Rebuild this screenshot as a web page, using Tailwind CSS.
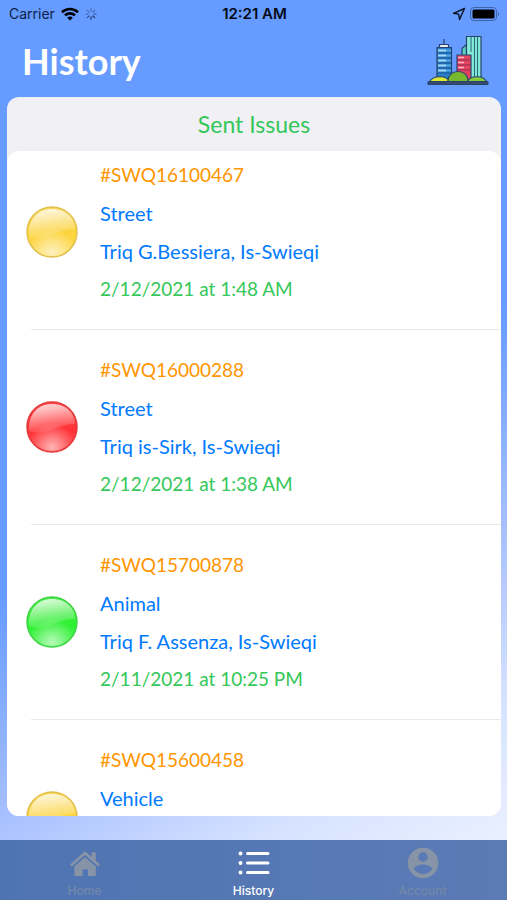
<!DOCTYPE html>
<html lang="en">
<head>
<meta charset="utf-8">
<meta name="viewport" content="width=device-width, initial-scale=1">
<title>History</title>
<script src="https://cdn.jsdelivr.net/npm/@tailwindcss/browser@4"></script>
</head>
<body class="h-screen overflow-hidden flex flex-col bg-[linear-gradient(150deg,#669bff_0%,#669bff_50%,#afc5ff_71%,#d6e2ff_83%,#eaf0ff_95%)] font-['Lato',sans-serif]">
<svg class="absolute size-0" aria-hidden="true">
  <defs>
    <linearGradient id="yBase" x1="0" y1="0" x2="0" y2="1"><stop offset="0" stop-color="#f8d558"/><stop offset=".55" stop-color="#fdd43c"/><stop offset="1" stop-color="#fbdc62"/></linearGradient>
    <linearGradient id="rBase" x1="0" y1="0" x2="0" y2="1"><stop offset="0" stop-color="#ff4a4c"/><stop offset=".55" stop-color="#ff3236"/><stop offset="1" stop-color="#ff4448"/></linearGradient>
    <linearGradient id="gBase" x1="0" y1="0" x2="0" y2="1"><stop offset="0" stop-color="#4cea4c"/><stop offset=".55" stop-color="#2ef032"/><stop offset="1" stop-color="#48f550"/></linearGradient>
    <linearGradient id="shine" x1=".3" y1="0" x2=".55" y2="1"><stop offset="0" stop-color="#fff" stop-opacity=".8"/><stop offset=".6" stop-color="#fff" stop-opacity=".32"/><stop offset="1" stop-color="#fff" stop-opacity=".04"/></linearGradient>
    <radialGradient id="glow" cx=".5" cy=".92" r=".5"><stop offset="0" stop-color="#fff" stop-opacity=".6"/><stop offset="1" stop-color="#fff" stop-opacity="0"/></radialGradient>
    <symbol id="gloss" viewBox="0 0 52 52">
      <path d="M3 30C2 13 12 3 26 3s23 9 23 20c-8 0-14 2-21 5S12 33 3 30z" fill="url(#shine)"/>
      <circle cx="26" cy="26" r="24" fill="url(#glow)"/>
    </symbol>
    <symbol id="ball-yellow" viewBox="0 0 52 52"><circle cx="26" cy="26" r="25" fill="url(#yBase)" stroke="#e2c050" stroke-width="1.5"/><use href="#gloss"/></symbol>
    <symbol id="ball-red" viewBox="0 0 52 52"><circle cx="26" cy="26" r="25" fill="url(#rBase)" stroke="#e23a3c" stroke-width="1.5"/><use href="#gloss"/></symbol>
    <symbol id="ball-green" viewBox="0 0 52 52"><circle cx="26" cy="26" r="25" fill="url(#gBase)" stroke="#40d446" stroke-width="1.5"/><use href="#gloss"/></symbol>
  </defs>
</svg>

<header class="shrink-0">
  <div class="grid grid-cols-3 items-center h-7 pl-[9px] pr-[7px] font-['Inter',sans-serif] text-[#0b1f48]">
    <div class="flex items-center gap-1.5 text-sm">
      <span>Carrier</span>
      <svg class="w-[18px] h-[14px]" viewBox="0 0 18 14" fill="none" stroke="#000" stroke-width="2.6" aria-hidden="true"><path d="M1 5.2a11.5 11.5 0 0 1 16 0M4 8.4a7.2 7.2 0 0 1 10 0"/><path d="M9 13.6 6.2 10.8a4 4 0 0 1 5.6 0z" fill="#000" stroke="none"/></svg>
      <svg class="size-3" viewBox="0 0 12 12" stroke="#1d3260" stroke-width="1.1" stroke-linecap="round" aria-hidden="true"><path d="M6 .8v2.4" opacity=".45"/><path d="m9.7 2.3-1.7 1.7" opacity=".5"/><path d="M11.2 6H8.8" opacity=".65"/><path d="M9.7 9.7 8 8"/><path d="M6 11.2V8.8"/><path d="M2.3 9.7 4 8" opacity=".7"/><path d="M.8 6h2.4" opacity=".5"/><path d="M2.3 2.3 4 4" opacity=".4"/></svg>
    </div>
    <div class="text-center text-[15px] font-semibold text-[#050a18] whitespace-nowrap">12:21 AM</div>
    <div class="flex items-center justify-end gap-1">
      <svg class="size-3.5" viewBox="0 0 14 14" fill="none" stroke="#0b1426" stroke-width="1.4" stroke-linejoin="round" aria-hidden="true"><path d="M12.500 1.500 1.500 6.300l5.200.8.800 5.400z"/></svg>
      <svg class="w-[30px] h-[14px]" viewBox="0 0 30 14" aria-hidden="true"><rect x=".5" y=".5" width="26" height="13" rx="3.5" fill="none" stroke="#3f62a8"/><rect x="2.5" y="2.5" width="22" height="9" rx="1.5"/><path d="M28 5c1.4.6 1.4 3.4 0 4z" fill="#3f62a8"/></svg>
    </div>
  </div>
  <div class="flex items-center justify-between h-[69px] pl-[22px] pr-[18px] pb-1">
    <h1 class="text-4xl font-bold text-white">History</h1>
    <svg class="w-[62px] h-[51px]" viewBox="0 0 62 51" stroke="#27436e" stroke-width="1.2" stroke-linejoin="round" role="img" aria-label="City buildings">
      <path d="M17 4v5" fill="none"/>
      <path d="M12.500 9.500h9v3h-9z" fill="#e8f1f8"/>
      <path d="M10 12.500h14.500V46H10z" fill="#2a7fc8"/>
      <path d="M11 15.500h8M11 20.500h8M11 25.500h8M11 30.500h8M11 35.500h8" stroke="#a5dcf8" stroke-width="1.8"/>
      <path d="M19 15.500h5M19 20.500h5M19 25.500h5M19 30.500h5M19 35.500h5" stroke="#4fa8e4" stroke-width="1.8"/>
      <path d="M10.500 18h13.500M10.500 23h13.500M10.500 28h13.500M10.500 33h13.500M10.500 38h13.500" fill="none" stroke="#1d5594" stroke-width="1"/>
      <path d="M35 46V13.500l4.500-4V46z" fill="#58cfc0"/>
      <path d="M39.500 1.500H54V46H39.500z" fill="#86ecd8"/>
      <path d="M44 2v15M47.500 2v43M50.500 2v43" fill="none" stroke="#2c6a80" stroke-width="1.1"/>
      <path d="M30 20h14v26H30z" fill="#e44460"/>
      <path d="M31 22.500h6M31 27.500h6M31 32.500h6" stroke="#ffb4c0" stroke-width="1.6"/>
      <path d="M30.500 25h13M30.500 30h13M30.500 35h13" fill="none" stroke="#8c2c50" stroke-width="1"/>
      <path d="M2.500 47c3-7 18-7 20 0z" fill="#dcea35"/>
      <path d="M40 47c3-7 17-7 19.500 0z" fill="#86cc3a"/>
      <path d="M21 47c-1-14 21-14 20 0z" fill="#78b82e"/>
      <rect x="1" y="46.500" width="60" height="3" rx="1" fill="#35496b"/>
    </svg>
  </div>
</header>

<main class="flex-1 min-h-0 ml-[7px] mr-1.5 mb-6 flex flex-col overflow-hidden rounded-xl bg-[#f0f0f5]">
  <h2 class="shrink-0 h-[54px] flex items-center justify-center text-[23px] text-[#34c759]">Sent Issues</h2>
  <div class="flex-1 min-h-0 overflow-y-auto [scrollbar-width:none] rounded-t-xl bg-white">
    <ul class="-mt-4 pl-6 text-[20px] leading-[28px] text-[#007aff]">
      <li class="flex items-start h-[195px] pt-[26px] border-b border-[#e9e9eb]">
        <svg class="size-[52px] shrink-0 mt-[45px] -ml-[5px]" role="img" aria-label="Pending"><use href="#ball-yellow"/></svg>
        <div class="ml-[22px] flex flex-col gap-[10px]">
          <p class="text-[19px] text-[#ff9500]">#SWQ16100467</p>
          <p>Street</p>
          <p>Triq G.Bessiera, Is-Swieqi</p>
          <p class="text-[19px] text-[#34c759]">2/12/2021 at 1:48 AM</p>
        </div>
      </li>
      <li class="flex items-start h-[195px] pt-[26px] border-b border-[#e9e9eb]">
        <svg class="size-[52px] shrink-0 mt-[45px] -ml-[5px]" role="img" aria-label="Open"><use href="#ball-red"/></svg>
        <div class="ml-[22px] flex flex-col gap-[10px]">
          <p class="text-[19px] text-[#ff9500]">#SWQ16000288</p>
          <p>Street</p>
          <p>Triq is-Sirk, Is-Swieqi</p>
          <p class="text-[19px] text-[#34c759]">2/12/2021 at 1:38 AM</p>
        </div>
      </li>
      <li class="flex items-start h-[195px] pt-[26px] border-b border-[#e9e9eb]">
        <svg class="size-[52px] shrink-0 mt-[45px] -ml-[5px]" role="img" aria-label="Resolved"><use href="#ball-green"/></svg>
        <div class="ml-[22px] flex flex-col gap-[10px]">
          <p class="text-[19px] text-[#ff9500]">#SWQ15700878</p>
          <p>Animal</p>
          <p>Triq F. Assenza, Is-Swieqi</p>
          <p class="text-[19px] text-[#34c759]">2/11/2021 at 10:25 PM</p>
        </div>
      </li>
      <li class="flex items-start h-[195px] pt-[26px]">
        <svg class="size-[52px] shrink-0 mt-[45px] -ml-[5px]" role="img" aria-label="Pending"><use href="#ball-yellow"/></svg>
        <div class="ml-[22px] flex flex-col gap-[10px]">
          <p class="text-[19px] text-[#ff9500]">#SWQ15600458</p>
          <p>Vehicle</p>
        </div>
      </li>
    </ul>
  </div>
</main>

<nav class="shrink-0 h-[60px] grid grid-cols-3 bg-linear-to-r from-[#4f74b2] to-[#5b7bb5] font-['Inter',sans-serif] text-xs font-medium text-[#7487a9]">
  <a href="#home" class="flex flex-col items-center gap-1 pt-[7px]">
    <svg class="size-8" viewBox="0 0 32 32" fill="#8793a6" aria-hidden="true"><path d="M16 4.300 22.600 10V5.200h4.200v8.500l4.200 3.700-1.800 2L16 8 2.800 19.400l-1.800-2z"/><path d="M16 10.200 26.800 19.500V28a1 1 0 0 1-1 1H19v-6.500h-5.500V29H6.300a1 1 0 0 1-1-1v-8.500z"/></svg>
    <span>Home</span>
  </a>
  <a href="#history" aria-current="page" class="flex flex-col items-center gap-1 pt-[7px] text-white">
    <svg class="size-8" viewBox="0 0 32 32" fill="none" stroke="#fff" stroke-width="3" stroke-linecap="round" aria-hidden="true"><path d="M9.500 6.500h20.500M9.500 16h20.500M9.500 25.500h20.500"/><path d="M2.500 6.500h.01M2.500 16h.01M2.500 25.500h.01" stroke-width="4"/></svg>
    <span>History</span>
  </a>
  <a href="#account" class="flex flex-col items-center gap-1 pt-[7px]">
    <svg class="size-8" viewBox="0 0 32 32" fill="#8793a6" aria-hidden="true"><path fill-rule="evenodd" d="M16 .7a15.300 15.300 0 1 0 0 30.600A15.300 15.300 0 0 0 16 .7zm0 4.600a4.700 4.700 0 1 1 0 9.400 4.700 4.700 0 0 1 0-9.400zm0 21.700c-3.800 0-7.200-2-9.200-4.900.1-3 6.100-4.700 9.200-4.700s9.100 1.700 9.200 4.700A11 11 0 0 1 16 27z"/></svg>
    <span>Account</span>
  </a>
</nav>
</body>
</html>
